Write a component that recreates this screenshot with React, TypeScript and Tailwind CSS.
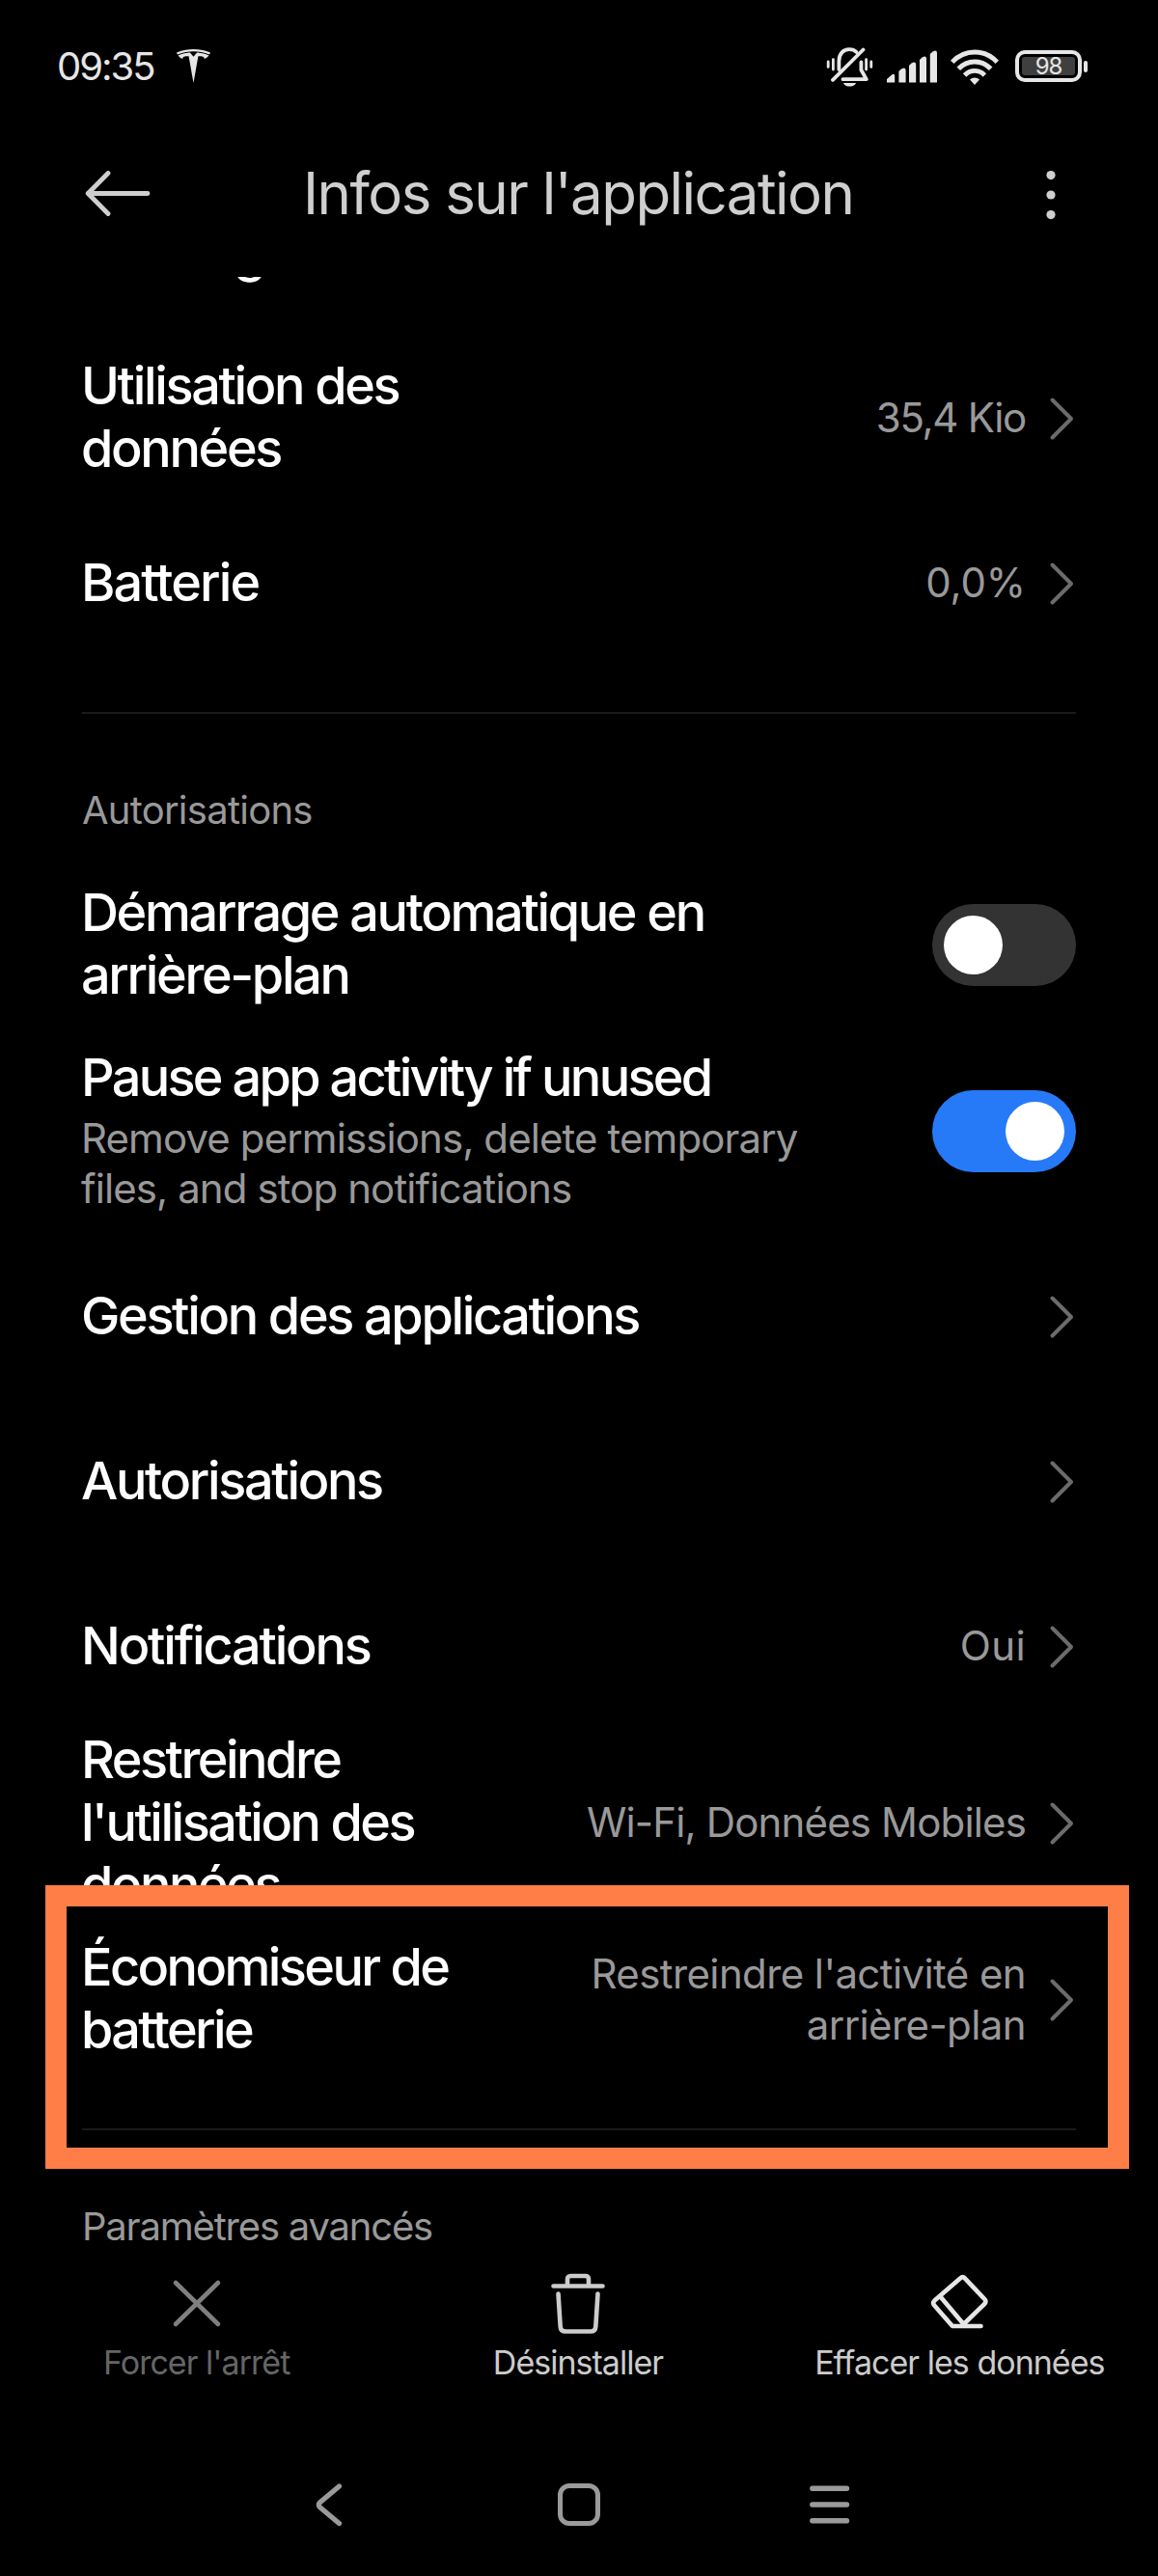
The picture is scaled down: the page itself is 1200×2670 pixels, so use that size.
import { ReactNode } from 'react';
import { SiTesla } from 'react-icons/si';

// --- Status bar icons ---
const VibrateOffIcon = () => (
  <svg width="49" height="42" viewBox="0 0 49 42" fill="none" stroke="#e6e6e6" strokeWidth="3.8" strokeLinecap="round" strokeLinejoin="round">
    <path d="M2.2 15V20.4M7.4 12.6V23M46.8 15V20.4M41.6 12.6V23" strokeWidth="2.8" />
    <path d="M13.4 23V14.5C13.4 6.5 18 2.2 24 2.2C27 2.2 29.8 3.2 31.5 5" />
    <path d="M36.4 15.5V23.5L41.8 33.2H17.5" />
    <path d="M38.5 2.5L7 33.8" />
    <path d="M18 37H31C30 39.6 27.4 40.6 24.5 40.6C21.6 40.6 19 39.6 18 37Z" fill="#e6e6e6" stroke="none" />
  </svg>
);

const SignalIcon = () => (
  <svg width="53" height="34" viewBox="0 0 53 34" fill="#e6e6e6">
    <path d="M0 33.5V30L5.5 25.2Q8.2 24 8.2 27V33.5Z" />
    <path d="M12.4 33.5V22Q15 19 17.5 18.6Q19.6 18.6 19.6 21V33.5Z" />
    <path d="M23 33.5V16Q25.5 13 28 12.6Q30.2 12.6 30.2 15V33.5Z" />
    <path d="M34 33.5V10Q36.5 7 39 6.6Q41 6.6 41 9V33.5Z" />
    <path d="M44.8 33.5V4Q47.5 1 50 .6Q52 .6 52 3V33.5Z" />
  </svg>
);

const WifiIcon = () => (
  <svg width="50" height="37" viewBox="0 0 50 37" fill="none" stroke="#e6e6e6" strokeWidth="4.9">
    <path d="M1.7 13.4C14.5 -.5 35.5 -.5 48.3 13.4" />
    <path d="M8.3 20.3C17.5 10.5 32.5 10.5 41.7 20.3" />
    <path d="M14.6 27C20.5 20.8 29.5 20.8 35.4 27" />
    <path d="M25 37L20 31.6C22.8 28.8 27.2 28.8 30 31.6Z" fill="#e6e6e6" stroke="none" />
  </svg>
);

const StatusBar = () => (
  <div className="flex h-[140px] items-start justify-between pl-[59px] pr-[73px] pt-[49px] text-[#e6e6e6]">
    <div className="flex items-start">
      <span className="w-[124px] text-[40px] leading-[40px] tracking-[-2px]">09:35</span>
      <SiTesla size={35} className="mt-[2px]" />
    </div>
    <div className="flex items-start">
      <VibrateOffIcon />
      <div className="ml-[14px] mt-[3px]"><SignalIcon /></div>
      <div className="ml-[13px] mt-[2px]"><WifiIcon /></div>
      <div className="ml-[17px] mt-[3px] flex items-center gap-[2px]">
        <div className="h-[33px] w-[69px] rounded-[10px] border-4 border-[#e6e6e6] p-[3px]">
          <div className="flex h-full items-center justify-center rounded-[3px] bg-[#3f3f3f] text-[24px] leading-none tracking-[-1.2px]">98</div>
        </div>
        <div className="h-[12px] w-[4px] rounded-[2px] bg-[#e6e6e6]" />
      </div>
    </div>
  </div>
);

const Header = () => (
  <header className="flex h-[147px] items-start pl-[87px] pt-[37px] text-[#cfcfcf]">
    <svg width="69" height="48" viewBox="0 0 69 48" fill="none" stroke="currentColor" strokeWidth="4.8" strokeLinecap="round" strokeLinejoin="round">
      <path d="M66 23.5H4.2M25 2.5L4.2 23.5L25 44.5" />
    </svg>
    <h1 className="ml-[158px] w-[770px] text-[60px] leading-[46px] tracking-[-1.55px]">Infos sur l&apos;application</h1>
    <svg width="10" height="54" viewBox="0 0 10 54" fill="currentColor">
      <circle cx="5" cy="4.6" r="4.6" />
      <circle cx="5" cy="25" r="4.6" />
      <circle cx="5" cy="45.6" r="4.6" />
    </svg>
  </header>
);

// --- Reusable list pieces ---
const Chevron = () => (
  <svg className="shrink-0" width="28" height="46" viewBox="0 0 28 46" fill="none" stroke="#6b6b6b" strokeWidth="4" strokeLinecap="round" strokeLinejoin="round">
    <path d="M3.5 3.5L23 23L3.5 42.5" />
  </svg>
);

const Switch = ({ on }: { on?: boolean }) => (
  <div className={`flex h-[85px] w-[149px] shrink-0 items-center rounded-full px-3 ${on ? 'justify-end bg-[#277af7]' : 'bg-[#333333]'}`}>
    <div className="size-[61px] rounded-full bg-white" />
  </div>
);

interface RowProps {
  title: string;
  value?: string;
  summary?: string;
  height?: string;
  titleTracking?: string;
  valueTracking?: string;
  children?: ReactNode;
}

const Row = ({
  title,
  value,
  summary,
  height = 'h-[171px]',
  titleTracking = 'tracking-[-2.35px]',
  valueTracking = 'tracking-[-0.85px]',
  children,
}: RowProps) => (
  <div className={`flex items-center justify-between ${height}`}>
    <div className="whitespace-pre-line pb-[3px]">
      <div className={`-ml-px text-[54px] font-medium leading-[65px] ${titleTracking}`}>{title}</div>
      {summary && <div className="mt-[5px] -ml-px text-[42px] leading-[52px] tracking-[-0.9px] text-[#999999]">{summary}</div>}
    </div>
    {children ?? (
      <div className="flex items-center gap-[24px]">
        {value && <div className={`whitespace-pre-line pb-[2px] text-right text-[42px] leading-[53px] text-[#999999] ${valueTracking}`}>{value}</div>}
        <Chevron />
      </div>
    )}
  </div>
);

const Divider = () => <div className="mt-[48px] h-[2px] bg-[#1a1a1a]" />;

const SectionTitle = ({ tracking, children }: { tracking: string; children: ReactNode }) => (
  <div className={`h-[154px] pt-[76px] text-[40px] leading-[48px] text-[#999999] ${tracking}`}>{children}</div>
);

// --- Bottom actions ---
const Action = ({ label, className, children }: { label: string; className: string; children: ReactNode }) => (
  <div className={`flex flex-col items-center ${className}`}>
    <div className="flex h-[73px] items-start">{children}</div>
    <span className="whitespace-nowrap text-[34px] leading-[41px] tracking-[-0.98px]">{label}</span>
  </div>
);

export default function App() {
  return (
    <main className="flex h-[2670px] w-[1200px] flex-col overflow-hidden bg-black font-['Inter','Roboto',sans-serif] text-white">
      <StatusBar />
      <Header />

      {/* Scrolled settings list */}
      <section className="h-[2063px] shrink-0 overflow-hidden px-[85px]">
        <div className="-mt-[110px]">
          <Row title="Stockage" titleTracking="tracking-[-3.2px]" />
          <Row title={'Utilisation des\ndonnées'} value="35,4 Kio" valueTracking="tracking-[-1.3px]" />
          <Row title="Batterie" titleTracking="tracking-[-1.9px]" value="0,0%" valueTracking="tracking-[-0.1px]" />
          <Divider />

          <SectionTitle tracking="tracking-[-0.75px]">Autorisations</SectionTitle>
          <Row title={'Démarrage automatique en\narrière-plan'}>
            <Switch />
          </Row>
          <Row
            title="Pause app activity if unused"
            titleTracking="tracking-[-2.7px]"
            summary={'Remove permissions, delete temporary\nfiles, and stop notifications'}
            height="h-[214px]"
          >
            <Switch on />
          </Row>
          <Row title="Gestion des applications" />
          <Row title="Autorisations" />
          <Row title="Notifications" titleTracking="tracking-[-2.2px]" value="Oui" valueTracking="tracking-[0.4px]" />
          <Row title={"Restreindre\nl'utilisation des\ndonnées"} titleTracking="tracking-[-2.5px]" value="Wi-Fi, Données Mobiles" height="h-[195px]" />

          {/* Highlighted entry */}
          <div className="relative">
            <Row
              title={'Économiseur de\nbatterie'}
              titleTracking="tracking-[-2.6px]"
              value={"Restreindre l'activité en\narrière-plan"}
              valueTracking="tracking-[-0.6px]"
            />
            <Divider />
            <div className="absolute -left-[38px] -top-[33px] h-[294px] w-[1123px] border-[22.5px] border-[#ff7d47]" />
          </div>

          <SectionTitle tracking="tracking-[-1.2px]">Paramètres avancés</SectionTitle>
        </div>
      </section>

      {/* Action bar */}
      <nav className="grid h-[190px] shrink-0 grid-cols-3 pl-[6px] pr-[8px] pt-[5px]">
        <Action label="Forcer l'arrêt" className="text-[#666666]">
          <svg className="mt-[7px]" width="52" height="52" viewBox="0 0 52 52" fill="none" stroke="#808080" strokeWidth="4.6" strokeLinecap="round">
            <path d="M4 4L48 47M48 4L4 47" />
          </svg>
        </Action>
        <Action label="Désinstaller" className="text-[#cccccc]">
          <svg width="58" height="66" viewBox="0 0 58 66" fill="none" stroke="#cccccc" strokeWidth="4.6" strokeLinecap="round" strokeLinejoin="round">
            <path d="M3.5 14.5H54.5M18 14V7.5Q18 4 21.5 4H36.5Q40 4 40 7.5V14" />
            <path d="M8.5 22.5L10.7 56.5Q11 61.5 16 61.5H42Q47 61.5 47.3 56.5L49.5 22.5" />
          </svg>
        </Action>
        <Action label="Effacer les données" className="text-[#cccccc]">
          <svg className="mt-[1px]" width="62" height="60" viewBox="0 0 62 60" fill="none" stroke="#e6e6e6" strokeWidth="4.6" strokeLinecap="round" strokeLinejoin="round">
            <path d="M35.6 53L57.2 32Q59.5 29.5 57.3 27L36.8 5.3Q34.6 3 32.3 5.3L5.4 28.6Q3 31 5.2 33.5L24 55H53.5" />
            <path d="M11.5 24.5L35.6 53" />
          </svg>
        </Action>
      </nav>

      {/* System navigation */}
      <footer className="flex h-[130px] shrink-0 items-start text-[#9a9a9a]">
        <svg className="ml-[325px] mt-[32px]" width="32" height="48" viewBox="0 0 32 48" fill="none" stroke="currentColor" strokeWidth="5.2" strokeLinecap="round" strokeLinejoin="round">
          <path d="M26.5 5L6.8 21.5Q3.8 24.2 6.8 27L26.5 43.5" />
        </svg>
        <div className="ml-[221px] mt-[34px] h-[44px] w-[44px] rounded-[12px] border-5 border-current" />
        <svg className="ml-[217px] mt-[36px]" width="42" height="40" viewBox="0 0 42 40" fill="none" stroke="currentColor" strokeWidth="5.4" strokeLinecap="round">
          <path d="M2.8 3.2H38.5M2.8 20H38.5M2.8 36.7H38.5" />
        </svg>
      </footer>
    </main>
  );
}
